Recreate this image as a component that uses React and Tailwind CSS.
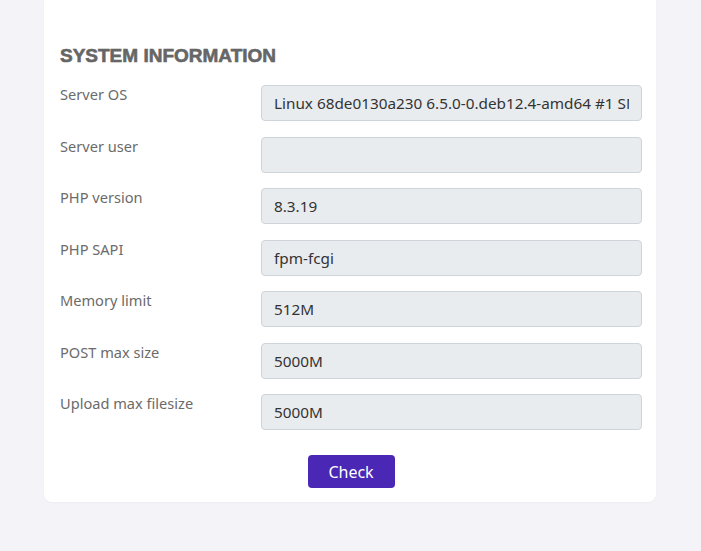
import React from "react";

const rows = [
  { label: "Server OS", value: "Linux 68de0130a230 6.5.0-0.deb12.4-amd64 #1 SMP PREEMPT_DYNAMIC Debian 6.5.10-1~bpo12+1 x86_64" },
  { label: "Server user", value: "" },
  { label: "PHP version", value: "8.3.19" },
  { label: "PHP SAPI", value: "fpm-fcgi" },
  { label: "Memory limit", value: "512M" },
  { label: "POST max size", value: "5000M" },
  { label: "Upload max filesize", value: "5000M" },
];

export default function App() {
  return (
    <div className="min-h-[551px] bg-[#f3f3f8] pl-[44px] pr-[45px] pb-[49px] font-['Noto_Sans',sans-serif]">
      <div className="rounded-b-lg bg-white pl-[16px] pr-[14px] pt-[44px] pb-[14px] shadow-[0_1px_2px_rgba(0,0,0,0.03)]">
        <h2 className="mb-[17px] text-[19px] font-bold uppercase leading-[24px] text-[#666] [-webkit-text-stroke:0.6px_#666] font-['Liberation_Sans',Arial,sans-serif]">
          System information
        </h2>
        <div className="flex flex-col gap-[15.5px]">
          {rows.map((r) => (
            <div key={r.label} className="flex">
              <div className="-mt-[1px] w-[201px] shrink-0 text-[14.6px] leading-[20px] text-[#6b6b6b]">{r.label}</div>
              <input
                readOnly
                value={r.value}
                className="h-[36px] flex-1 rounded-[4px] border border-[#ced4da] bg-[#e9ecef] px-[12px] text-[15.3px] text-[#333] outline-none"
              />
            </div>
          ))}
        </div>
        <div className="mt-[25px] flex justify-center">
          <button className="h-[33px] w-[87px] rounded-[4px] bg-[#4a28b5] text-[16px] text-white">Check</button>
        </div>
      </div>
    </div>
  );
}
